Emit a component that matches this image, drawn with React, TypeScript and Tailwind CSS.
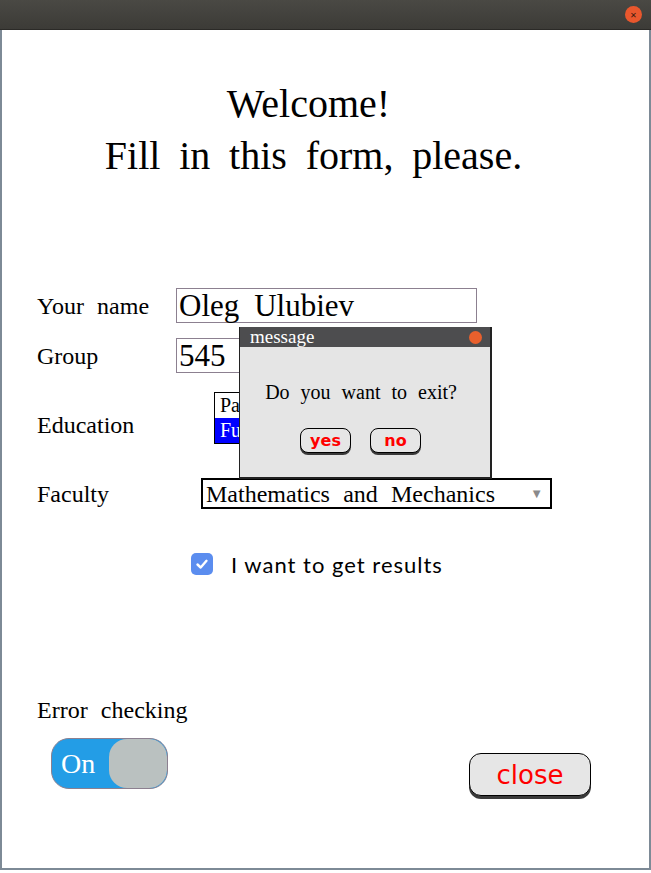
import React from 'react';

// Tk-style form window with a modal "message" dialog on top

const serif = { fontFamily: '"Liberation Serif", "DejaVu Serif", serif', wordSpacing: '0.45em' };

const App: React.FC = () => {
  return (
    <div className="w-[651px] h-[873px] bg-white overflow-hidden">
      {/* title bar */}
      <div className="h-[30px] bg-gradient-to-b from-[#4a4944] to-[#3c3b37] flex items-center justify-end pr-[9px] border-b border-[#2b2a27]">
        <div className="w-[17px] h-[17px] rounded-full bg-[#e9572d] flex items-center justify-center text-[#3a1a10] text-[11px] leading-none">
          ×
        </div>
      </div>

      {/* window body */}
      <div className="relative h-[840px] border-l-2 border-r-2 border-b-2 border-[#7d8a96] text-black" style={serif}>
        <div className="pt-[48px] pr-[24px] text-center text-[40px] leading-[52px]" style={{ wordSpacing: '0.22em' }}>
          <div className="pr-[10px]">Welcome!</div>
          <div>Fill in this form, please.</div>
        </div>

        <div className="mt-[106px] pl-[35px] text-[24px]">
          <div className="flex items-center h-[35px]">
            <span className="w-[139px]">Your name</span>
            <div className="w-[301px] h-[35px] border border-[#8c8090] px-[2px] text-[31px] leading-[33px]">
              Oleg Ulubiev
            </div>
          </div>
          <div className="flex items-center h-[35px] mt-[15px]">
            <span className="w-[139px]">Group</span>
            <div className="w-[120px] h-[35px] border border-[#8c8090] px-[2px] text-[31px] leading-[33px]">545</div>
          </div>
          <div className="flex items-center h-[52px] mt-[19px]">
            <span className="w-[177px] mt-[14px]">Education</span>
            <div className="w-[120px] border border-black text-[20px] leading-[25px] overflow-hidden">
              <div className="px-[5px] bg-white">Part</div>
              <div className="px-[5px] bg-[#0000ff] text-white">Full</div>
            </div>
          </div>
          <div className="flex items-center h-[31px] mt-[34px]">
            <span className="w-[164px]">Faculty</span>
            <div className="w-[351px] h-[31px] border-2 border-black flex items-center justify-between pl-[3px] pr-[7px] text-[24px]">
              <span>Mathematics and Mechanics</span>
              <span className="text-[#8a8a8a] text-[13px]">▼</span>
            </div>
          </div>

          <div className="flex items-center h-[22px] mt-[44px] ml-[154px] gap-[18px]">
            <div className="w-[22px] h-[22px] rounded-[5px] bg-[#5b8def] flex items-center justify-center">
              <svg width="14" height="14" viewBox="0 0 14 14" fill="none">
                <path d="M2.5 7.5 L5.7 10.5 L11.5 3.8" stroke="white" strokeWidth="2.4" strokeLinecap="round" strokeLinejoin="round" />
              </svg>
            </div>
            <span className="text-[22px] tracking-[1px]" style={{ fontFamily: '"Lato", "Open Sans", sans-serif', wordSpacing: 'normal' }}>
              I want to get results
            </span>
          </div>

          <div className="mt-[120px] h-[30px] leading-[30px]">Error checking</div>

          <div className="flex items-start justify-between mt-[13px] pl-[14px] pr-[58px]">
            <div className="w-[117px] h-[51px] rounded-[18px] border border-[#8c8090] bg-[#239de6] flex overflow-hidden">
              <span className="text-white text-[28px] leading-[49px] pl-[9px] w-[57px]">On</span>
              <div className="flex-1 bg-[#bac1c0] rounded-[18px]" />
            </div>
            <button
              className="mt-[15px] w-[122px] h-[43px] rounded-[12px] border border-black bg-[#e6e6e6] shadow-[0_3px_0_#3a3a3a] text-[#ff0000] text-[26px] leading-[38px]"
              style={{ fontFamily: '"DejaVu Sans", "Open Sans", sans-serif' }}
            >
              close
            </button>
          </div>
        </div>

        {/* modal message dialog */}
        <div className="absolute left-[237px] top-[297px] w-[253px] h-[152px] bg-[#e5e5e5] border-r-2 border-b-2 border-l border-[#222]">
          <div className="h-[20px] bg-[#4d4d4f] flex items-center justify-between pl-[10px] pr-[8px] text-white text-[19px] leading-[20px]" style={{ wordSpacing: 'normal' }}>
            <span>message</span>
            <div className="w-[13px] h-[13px] rounded-full bg-[#e9602d]" />
          </div>
          <div className="text-center text-[20px] leading-[24px] mt-[33px] pr-[8px]" style={{ wordSpacing: '0.3em' }}>
            Do you want to exit?
          </div>
          <div className="flex gap-[19px] mt-[24px] ml-[60px]">
            {['yes', 'no'].map((t) => (
              <button
                key={t}
                className="w-[51px] h-[25px] rounded-[8px] border border-black bg-[#e6e6e6] shadow-[0_2px_0_#3a3a3a] text-[#ff0000] text-[16px] font-bold leading-[22px]"
                style={{ fontFamily: '"DejaVu Sans", sans-serif', wordSpacing: 'normal' }}
              >
                {t}
              </button>
            ))}
          </div>
        </div>
      </div>
    </div>
  );
};

export default App;
